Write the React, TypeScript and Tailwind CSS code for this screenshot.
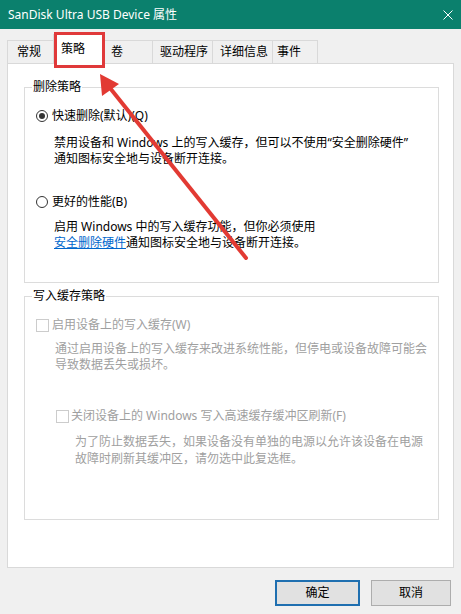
import React from "react";

const font = { fontFamily: '"Noto Sans", "Noto Sans CJK SC", sans-serif' };

function Radio({ checked }: { checked?: boolean }) {
  return (
    <span className="w-[12px] h-[12px] rounded-full border border-[#333333] bg-white flex items-center justify-center shrink-0">
      {checked && <span className="w-[6px] h-[6px] rounded-full bg-[#333333]" />}
    </span>
  );
}

function Check() {
  return <span className="w-[13px] h-[13px] border border-[#cccccc] bg-white shrink-0" />;
}

export default function App() {
  const tabs = [
    { t: "常规", w: "w-[46px] pl-[9px] border-l border-t", sel: false },
    { t: "策略", w: "", sel: true },
    { t: "卷", w: "w-[47px] pl-[6px] border-t", sel: false },
    { t: "驱动程序", w: "w-[60px] pl-[7px] border-l border-t", sel: false },
    { t: "详细信息", w: "w-[60px] pl-[7px] border-l border-t", sel: false },
    { t: "事件", w: "w-[46px] pl-[4px] border-l border-t border-r", sel: false },
  ];
  return (
    <div className="w-[461px] h-[614px] bg-[#f0f0f0] relative overflow-hidden text-[12px] text-black" style={font}>
      <div className="h-[29px] bg-[#0b806d] flex items-center justify-between pl-[8px] pr-[8px] text-white text-[12px]">
        <span className="leading-[16px]">SanDisk Ultra USB Device 属性</span>
        <svg width="10" height="10" viewBox="0 0 10 10">
          <path d="M0.5 0.5 L9.5 9.5 M9.5 0.5 L0.5 9.5" stroke="white" strokeWidth="1" />
        </svg>
      </div>

      <div className="flex items-end pl-[7px] mt-[5px] h-[29px] relative z-10">
        {tabs.map((tab) =>
          tab.sel ? (
            <div
              key={tab.t}
              className="w-[52px] h-[30px] -mb-[1px] bg-white border-l border-t border-r border-[#d9d9d9] pl-[7px] pt-[6px] leading-[16px]"
            >
              {tab.t}
            </div>
          ) : (
            <div
              key={tab.t}
              className={`h-[23px] flex items-center leading-[16px] border-[#d9d9d9] bg-[#f0f0f0] ${tab.w}`}
            >
              {tab.t}
            </div>
          )
        )}
      </div>

      <div className="mx-[7px] h-[505px] bg-white border border-[#d9d9d9] pt-[23px] pl-[16px]">
        <div className="w-[415px] border border-[#dcdcdc] relative pt-[20px] pl-[11px] pb-[31px] leading-[16px]">
          <span className="absolute left-[7px] -top-[9px] bg-white px-[1px] leading-[16px]">删除策略</span>
          <div className="flex items-center h-[16px] gap-[4px]">
            <Radio checked />
            <span>快速删除(默认)(Q)</span>
          </div>
          <div className="ml-[18px] mt-[11px] whitespace-nowrap">
            <div>禁用设备和 Windows 上的写入缓存，但可以不使用“安全删除硬件”</div>
            <div>通知图标安全地与设备断开连接。</div>
          </div>
          <div className="flex items-center h-[16px] gap-[4px] mt-[27px]">
            <Radio />
            <span>更好的性能(B)</span>
          </div>
          <div className="ml-[18px] mt-[9px] whitespace-nowrap">
            <div>启用 Windows 中的写入缓存功能，但你必须使用</div>
            <div>
              <span className="text-[#0066cc] underline">安全删除硬件</span>通知图标安全地与设备断开连接。
            </div>
          </div>
        </div>

        <div className="w-[415px] mt-[13px] border border-[#dcdcdc] relative pt-[20px] pl-[11px] pb-[52px] leading-[16px] text-[#a0a0a0]">
          <span className="absolute left-[7px] -top-[9px] bg-white px-[1px] leading-[16px] text-black">写入缓存策略</span>
          <div className="flex items-center h-[16px] gap-[3px]">
            <Check />
            <span>启用设备上的写入缓存(W)</span>
          </div>
          <div className="ml-[19px] mt-[8px] whitespace-nowrap">
            <div>通过启用设备上的写入缓存来改进系统性能，但停电或设备故障可能会</div>
            <div>导致数据丢失或损坏。</div>
          </div>
          <div className="flex items-center h-[16px] gap-[2px] mt-[35px] ml-[20px]">
            <Check />
            <span>关闭设备上的 Windows 写入高速缓存缓冲区刷新(F)</span>
          </div>
          <div className="ml-[39px] mt-[9px] whitespace-nowrap leading-[17px]">
            <div>为了防止数据丢失，如果设备没有单独的电源以允许该设备在电源</div>
            <div>故障时刷新其缓冲区，请勿选中此复选框。</div>
          </div>
        </div>
      </div>

      <div className="flex justify-end gap-[11px] pr-[10px] mt-[12px]">
        <button className="w-[85px] h-[26px] border-2 border-[#1f6fb0] bg-[#e1e1e1] leading-[16px]">确定</button>
        <button className="w-[80px] h-[26px] border border-[#adadad] bg-[#e1e1e1] leading-[16px]">取消</button>
      </div>

      <div className="absolute left-[54px] top-[32px] w-[51px] h-[36px] border-[3px] border-[#e0393a] pointer-events-none z-20" />

      <svg className="absolute left-0 top-0 pointer-events-none z-20" width="461" height="614" viewBox="0 0 461 614">
        <path d="M246 258 L110 88" stroke="#e23a33" strokeWidth="4" strokeLinecap="round" />
        <path d="M100 74 L102 96 L119 84 Z" fill="#e23a33" />
      </svg>
    </div>
  );
}
